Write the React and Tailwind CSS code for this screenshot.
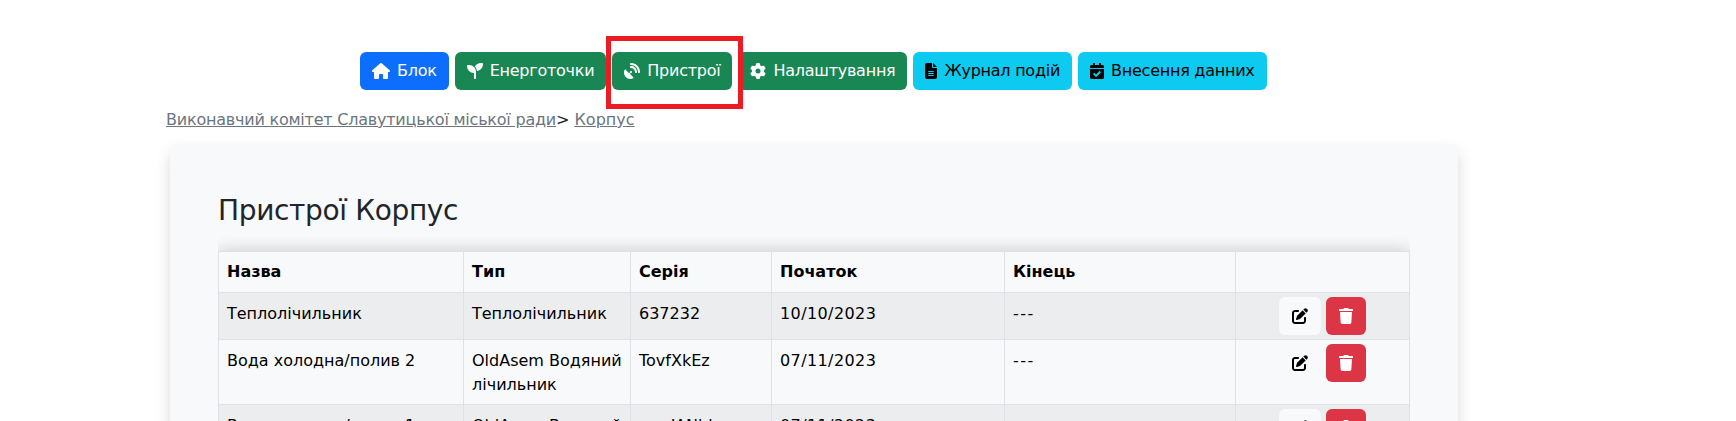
import { FaCalendarCheck, FaTrash } from "react-icons/fa"
import { FaHouse, FaSeedling, FaSatelliteDish, FaGear, FaFileLines, FaPenToSquare } from "react-icons/fa6"

const navButtons = [
  { label: "Блок", icon: FaHouse, iconSize: "w-[18px] h-[16px]", color: "bg-[#0d6efd] text-white" },
  { label: "Енерготочки", icon: FaSeedling, iconSize: "w-[16px] h-[16px]", color: "bg-[#198754] text-white" },
  { label: "Пристрої", icon: FaSatelliteDish, iconSize: "w-[16px] h-[16px]", color: "bg-[#198754] text-white", marked: true },
  { label: "Налаштування", icon: FaGear, iconSize: "w-[16px] h-[16px]", color: "bg-[#198754] text-white" },
  { label: "Журнал подій", icon: FaFileLines, iconSize: "w-[12px] h-[16px]", color: "bg-[#0dcaf0] text-black" },
  { label: "Внесення данних", icon: FaCalendarCheck, iconSize: "w-[14px] h-[16px]", color: "bg-[#0dcaf0] text-black" },
]

const rows = [
  { name: "Теплолічильник", type: "Теплолічильник", serial: "637232", start: "10/10/2023", end: "---" },
  { name: "Вода холодна/полив 2", type: "OldAsem Водяний лічильник", serial: "TovfXkEz", start: "07/11/2023", end: "---" },
  { name: "Вода холодна/полив 1", type: "OldAsem Водяний лічильник", serial: "wqzJANbk", start: "07/11/2023", end: "---" },
]

function NavButton({ item }) {
  const Icon = item.icon
  return (
    <a className={`flex items-center gap-[7px] h-[38px] px-[12px] rounded-[6px] text-[16px] tracking-[-0.25px] ${item.color}`}>
      <Icon className={item.iconSize} />
      <span>{item.label}</span>
    </a>
  )
}

export default function App() {
  return (
    <div className="h-[421px] overflow-hidden bg-white font-['DejaVu_Sans',sans-serif] text-[16px] text-[#212529]">
      <div className="flex gap-[6px] pt-[52px] pl-[360px]">
        {navButtons.map((item) => (
          <div key={item.label} className="relative">
            <NavButton item={item} />
            {item.marked && (
              <div className="absolute z-10 left-[-6px] right-[-11px] top-[-16px] bottom-[-19px] border-[5px] border-[#ed1c24]" />
            )}
          </div>
        ))}
      </div>

      <div className="pl-[166px] mt-[18px] leading-[24px]">
        <a className="underline text-[#6c757d] tracking-[-0.22px]">Виконавчий комітет Славутицької міської ради</a>
        <span>&gt; </span>
        <a className="underline text-[#6c757d]">Корпус</a>
      </div>

      <div className="ml-[170px] mt-[12px] w-[1288px] rounded-[8px] bg-[#f8f9fa] px-[48px] pt-[48px] shadow-[0_8px_16px_rgba(0,0,0,0.15)]">
        <h2 className="text-[28px] leading-[34px] mb-[7px] pt-[2px] tracking-[-0.35px]">Пристрої Корпус</h2>
        <div className="overflow-hidden pt-[16px]">
          <table className="w-[1192px] table-fixed border-collapse text-black shadow-[0_0_16px_rgba(0,0,0,0.2)] bg-[#f8f9fa]">
            <colgroup>
              <col className="w-[245px]" />
              <col className="w-[167px]" />
              <col className="w-[141px]" />
              <col className="w-[233px]" />
              <col className="w-[231px]" />
              <col />
            </colgroup>
            <thead>
              <tr className="text-left">
                {["Назва", "Тип", "Серія", "Початок", "Кінець", ""].map((h) => (
                  <th key={h} className="border border-[#dee2e6] p-[8px] font-bold leading-[24px]">{h}</th>
                ))}
              </tr>
            </thead>
            <tbody>
              {rows.map((r, i) => (
                <tr key={r.serial} className={i % 2 === 0 ? "bg-[#ecedee]" : ""}>
                  <td className="border border-[#dee2e6] px-[8px] pt-[9px] pb-[7px] align-top leading-[24px]">{r.name}</td>
                  <td className="border border-[#dee2e6] px-[8px] pt-[9px] pb-[7px] align-top leading-[24px]">{r.type}</td>
                  <td className="border border-[#dee2e6] px-[8px] pt-[9px] pb-[7px] align-top leading-[24px]">{r.serial}</td>
                  <td className="border border-[#dee2e6] px-[8px] pt-[9px] pb-[7px] align-top leading-[24px] tracking-[0.4px]">{r.start}</td>
                  <td className="border border-[#dee2e6] px-[8px] pt-[9px] pb-[7px] align-top leading-[24px] tracking-[1.5px]">{r.end}</td>
                  <td className="border border-[#dee2e6] px-[8px] py-[4px] align-top">
                    <div className="flex justify-center gap-[5px]">
                      <button className={`flex items-center justify-center w-[42px] h-[38px] rounded-[6px] ${i % 2 === 0 ? "bg-[#f8f9fa]" : ""}`}>
                        <FaPenToSquare className="w-[16px] h-[16px] text-black" />
                      </button>
                      <button className="flex items-center justify-center w-[40px] h-[38px] rounded-[6px] bg-[#dc3545]">
                        <FaTrash className="w-[14px] h-[16px] text-white" />
                      </button>
                    </div>
                  </td>
                </tr>
              ))}
            </tbody>
          </table>
        </div>
      </div>
    </div>
  )
}
